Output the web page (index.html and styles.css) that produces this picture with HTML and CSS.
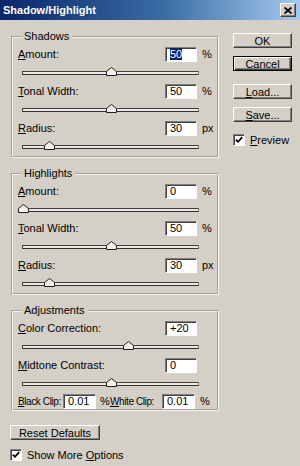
FILE: index.html
```html
<!DOCTYPE html>
<html lang="en">
<head>
<meta charset="utf-8" />
<title>Shadow/Highlight</title>
<link rel="stylesheet" href="styles.css">
</head>
<body>
<div class="dialog">

  <!-- title bar -->
  <div class="titlebar">
    <span class="title">Shadow/Highlight</span>
    <span class="close">
      <svg width="8" height="7" viewBox="0 0 8 7"><path d="M0.5 0.5 L7.5 6.5 M7.5 0.5 L0.5 6.5" stroke="#000" stroke-width="1.8" fill="none"/></svg>
    </span>
  </div>

  <div class="content">
    <div class="main">

      <fieldset class="group">
        <legend>Shadows</legend>
        <div class="field">
          <span class="label"><u>A</u>mount:</span>
          <span class="input"><span class="sel">50</span></span>
          <span class="unit">%</span>
        </div>
        <div class="slider"><div class="track"><span class="thumb" style="left:50%"><svg width="11" height="9" viewBox="0 0 11 9"><path d="M0.5 8.5 V4.5 L5.5 0.5 L10.5 4.5 V8.5 Z" fill="#f2f1ee" stroke="#202020"/></svg></span></div></div>
        <div class="field">
          <span class="label"><u>T</u>onal Width:</span>
          <span class="input">50</span>
          <span class="unit">%</span>
        </div>
        <div class="slider"><div class="track"><span class="thumb" style="left:50%"><svg width="11" height="9" viewBox="0 0 11 9"><path d="M0.5 8.5 V4.5 L5.5 0.5 L10.5 4.5 V8.5 Z" fill="#f2f1ee" stroke="#202020"/></svg></span></div></div>
        <div class="field">
          <span class="label"><u>R</u>adius:</span>
          <span class="input">30</span>
          <span class="unit">px</span>
        </div>
        <div class="slider"><div class="track"><span class="thumb" style="left:15%"><svg width="11" height="9" viewBox="0 0 11 9"><path d="M0.5 8.5 V4.5 L5.5 0.5 L10.5 4.5 V8.5 Z" fill="#f2f1ee" stroke="#202020"/></svg></span></div></div>
      </fieldset>

      <fieldset class="group">
        <legend>Highlights</legend>
        <div class="field">
          <span class="label"><u>A</u>mount:</span>
          <span class="input">0</span>
          <span class="unit">%</span>
        </div>
        <div class="slider"><div class="track"><span class="thumb" style="left:0%"><svg width="11" height="9" viewBox="0 0 11 9"><path d="M0.5 8.5 V4.5 L5.5 0.5 L10.5 4.5 V8.5 Z" fill="#f2f1ee" stroke="#202020"/></svg></span></div></div>
        <div class="field">
          <span class="label"><u>T</u>onal Width:</span>
          <span class="input">50</span>
          <span class="unit">%</span>
        </div>
        <div class="slider"><div class="track"><span class="thumb" style="left:50%"><svg width="11" height="9" viewBox="0 0 11 9"><path d="M0.5 8.5 V4.5 L5.5 0.5 L10.5 4.5 V8.5 Z" fill="#f2f1ee" stroke="#202020"/></svg></span></div></div>
        <div class="field">
          <span class="label"><u>R</u>adius:</span>
          <span class="input">30</span>
          <span class="unit">px</span>
        </div>
        <div class="slider"><div class="track"><span class="thumb" style="left:15%"><svg width="11" height="9" viewBox="0 0 11 9"><path d="M0.5 8.5 V4.5 L5.5 0.5 L10.5 4.5 V8.5 Z" fill="#f2f1ee" stroke="#202020"/></svg></span></div></div>
      </fieldset>

      <fieldset class="group">
        <legend>Adjustments</legend>
        <div class="field">
          <span class="label"><u>C</u>olor Correction:</span>
          <span class="input">+20</span>
          <span class="unit"></span>
        </div>
        <div class="slider"><div class="track"><span class="thumb" style="left:60%"><svg width="11" height="9" viewBox="0 0 11 9"><path d="M0.5 8.5 V4.5 L5.5 0.5 L10.5 4.5 V8.5 Z" fill="#f2f1ee" stroke="#202020"/></svg></span></div></div>
        <div class="field">
          <span class="label"><u>M</u>idtone Contrast:</span>
          <span class="input">0</span>
          <span class="unit"></span>
        </div>
        <div class="slider"><div class="track"><span class="thumb" style="left:50%"><svg width="11" height="9" viewBox="0 0 11 9"><path d="M0.5 8.5 V4.5 L5.5 0.5 L10.5 4.5 V8.5 Z" fill="#f2f1ee" stroke="#202020"/></svg></span></div></div>
        <div class="clip-row">
          <span class="clip-label"><u>B</u>lack Clip:</span>
          <span class="input clip">0.01</span>
          <span class="clip-unit">%</span>
          <span class="clip-label white"><u>W</u>hite Clip:</span>
          <span class="input clip">0.01</span>
          <span class="unit">%</span>
        </div>
      </fieldset>

    </div><!-- end of main -->

    <div class="side">
      <button class="btn ok">OK</button>
      <button class="btn default">Cancel</button>
      <button class="btn load"><u>L</u>oad...</button>
      <button class="btn"><u>S</u>ave...</button>
      <div class="check-row preview">
        <span class="checkbox"><svg width="8" height="8" viewBox="0 0 8 8"><path d="M0.8 3.6 L3 5.8 L7.2 1.2" stroke="#000" stroke-width="1.8" fill="none"/></svg></span>
        <span><u>P</u>review</span>
      </div>
    </div>
  </div><!-- end of content -->

  <div class="footer">
    <button class="btn reset">Reset Defaults</button>
    <div class="check-row more">
      <span class="checkbox"><svg width="8" height="8" viewBox="0 0 8 8"><path d="M0.8 3.6 L3 5.8 L7.2 1.2" stroke="#000" stroke-width="1.8" fill="none"/></svg></span>
      <span class="more-text">Show More <u>O</u>ptions</span>
    </div>
  </div>

</div>
</body>
</html>
```

FILE: styles.css
```css
body {
  margin: 0;
  background-color: #d4d0c8;
  font-family: "Liberation Sans", Arial, sans-serif;
  font-size: 11px;
  color: #000;
}

.dialog {
  width: 300px;
  height: 466px;
  overflow: hidden;
  background-color: #d4d0c8;
}

/* title bar */
.titlebar {
  height: 20px;
  display: flex;
  align-items: center;
  padding: 0 4px 0 3px;
  background: linear-gradient(to right, #0a246a, #3a6ea5 55%, #a6caf0);
}

.title {
  flex: 1;
  color: #fff;
  font-weight: bold;
  font-size: 11px;
}

.close {
  box-sizing: border-box;
  width: 16px;
  height: 14px;
  display: flex;
  align-items: center;
  justify-content: center;
  background-color: #d4d0c8;
  border: 1px solid;
  border-color: #fff #404040 #404040 #fff;
  box-shadow: inset -1px -1px #808080;
}

/* layout */
.content {
  display: flex;
  padding: 10px 0 0 11px;
}

.main {
  width: 208px;
}

.side {
  width: 59px;
  margin-left: 14px;
  display: flex;
  flex-direction: column;
}

/* group boxes */
.group {
  box-sizing: border-box;
  width: 208px;
  min-width: 0;
  margin: 0;
  padding: 2px 5px 0 5px;
  border: 2px groove #f4f3f0;
}

.group + .group {
  margin-top: 9px;
}

.group legend {
  padding: 0 3px;
  margin-left: 3px;
  line-height: 13px;
}

.field {
  height: 18px;
  display: flex;
  align-items: center;
}

.label {
  flex: 1;
  white-space: nowrap;
}

.input {
  box-sizing: border-box;
  width: 32px;
  height: 15px;
  padding-left: 4px;
  line-height: 13px;
  background-color: #fff;
  border: 1px solid;
  border-color: #808080 #fff #fff #808080;
  box-shadow: inset 1px 1px #404040;
}

.sel {
  background-color: #0a246a;
  color: #fff;
}

.unit {
  width: 10px;
  margin-left: 5px;
}

/* sliders */
.slider {
  height: 19px;
  display: flex;
  align-items: center;
  padding-left: 4px;
}

.track {
  box-sizing: border-box;
  position: relative;
  width: 177px;
  height: 4px;
  background-color: #ebe9e4;
  border: 1px solid;
  border-color: #404040 #808080 #303030 #404040;
}

.thumb {
  position: absolute; /* sits over the track */
  top: -5px;
  width: 11px;
  height: 9px;
  margin-left: -5px;
}

.thumb svg {
  display: block;
}

/* clip row */
.clip-row {
  height: 16px;
  display: flex;
  align-items: center;
}

.clip-label {
  width: 45px;
  white-space: nowrap;
  font-size: 10px;
  letter-spacing: -0.4px;
}

.clip-label.white {
  width: 52px;
}

.input.clip {
  width: 33px;
}

.clip-unit {
  width: 10px;
  margin-left: 4px;
}

/* buttons */
.btn {
  box-sizing: border-box;
  height: 15px;
  padding: 0;
  margin: 0;
  display: flex;
  align-items: center;
  justify-content: center;
  font-family: inherit;
  font-size: 11px;
  color: #000;
  background-color: #d4d0c8;
  border: 1px solid;
  border-color: #fff #404040 #404040 #fff;
  box-shadow: inset -1px -1px #808080;
}

.btn.ok {
  margin-top: 3px;
}

.btn.default {
  border: 1px solid #000;
  box-shadow: inset 1px 1px #fff, inset -1px -1px #404040, inset -2px -2px #808080;
}

.side .btn + .btn {
  margin-top: 8px;
}

.side .btn.load {
  margin-top: 13px;
}

/* checkboxes */
.check-row {
  display: flex;
  align-items: center;
  gap: 5px;
  height: 12px;
}

.check-row.preview {
  margin-top: 12px;
}

.checkbox {
  box-sizing: border-box;
  width: 12px;
  height: 12px;
  display: flex;
  align-items: center;
  justify-content: center;
  background-color: #fff;
  border: 1px solid;
  border-color: #808080 #fff #fff #808080;
  box-shadow: inset 1px 1px #404040;
}

/* footer */
.footer {
  padding: 14px 0 0 10px;
}

.btn.reset {
  width: 90px;
}

.check-row.more {
  margin-top: 9px;
}

.more-text {
  white-space: nowrap;
}
```
